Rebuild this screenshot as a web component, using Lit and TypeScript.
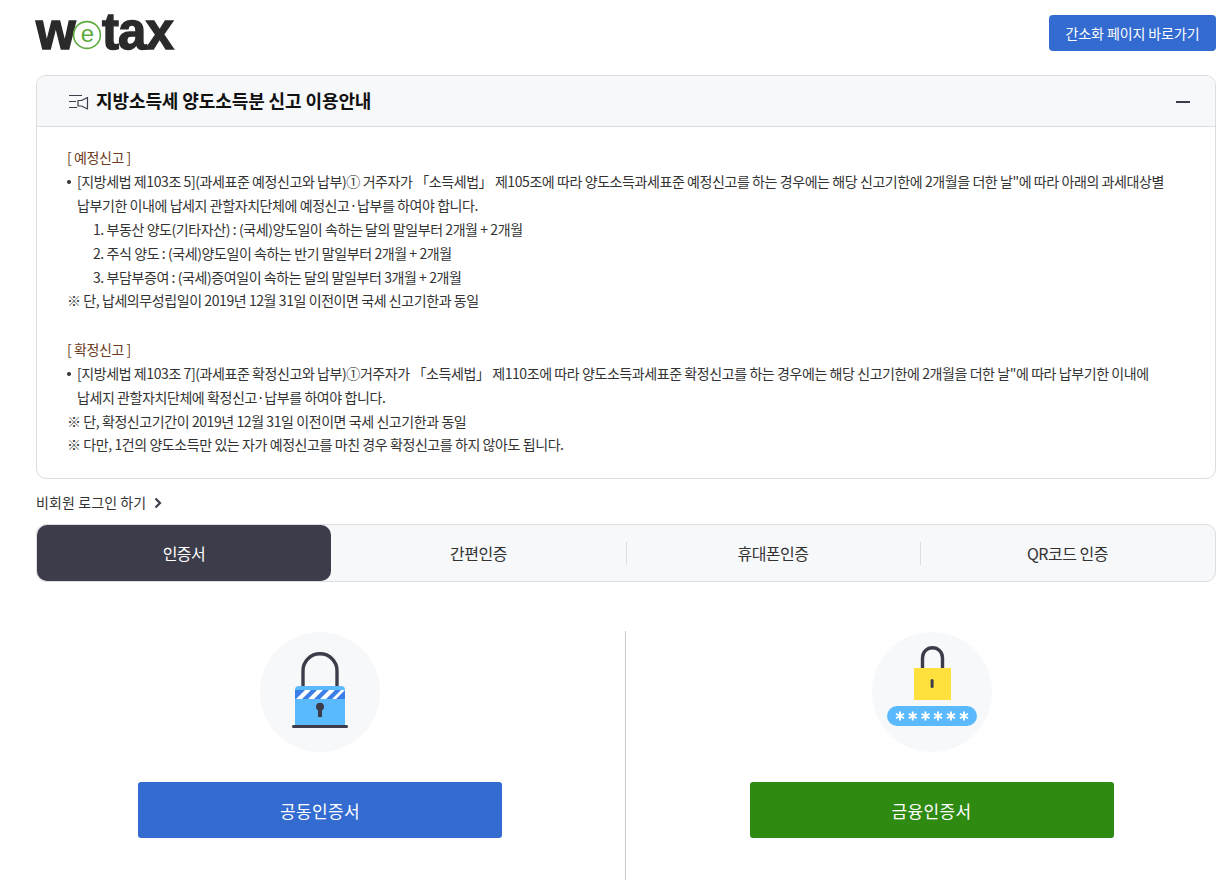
import { LitElement, css, html, svg } from 'lit'
import { customElement } from 'lit/decorators.js'

const steps = [
  '1. 부동산 양도(기타자산) : (국세)양도일이 속하는 달의 말일부터 2개월 + 2개월',
  '2. 주식 양도 : (국세)양도일이 속하는 반기 말일부터 2개월 + 2개월',
  '3. 부담부증여 : (국세)증여일이 속하는 달의 말일부터 3개월 + 2개월',
]
const tabs = ['인증서', '간편인증', '휴대폰인증', 'QR코드 인증']
const stars = [28, 40.7, 53.5, 66, 79, 92]

@customElement('app-root')
export class AppRoot extends LitElement {
  static styles = css`
    :host {
      display: block;
      height: 891px;
      overflow: hidden;
      background: #fff;
      color: #333;
      font-family: "Noto Sans CJK KR", "Noto Sans", sans-serif;
    }
    .page { padding: 0 11px 0 36px; }
    .top {
      display: flex;
      justify-content: space-between;
      align-items: flex-start;
      height: 75px;
    }
    .logo {
      display: flex;
      align-items: center;
      margin-top: 10px;
      height: 44px;
      font: 700 51px/44px "Liberation Sans", sans-serif;
      -webkit-text-stroke: 1.4px #2a2a2a;
      color: #2a2a2a;
      letter-spacing: -0.8px;
    }
    .logo svg { margin: 6px 0 0 -3px; }
    .logo text { -webkit-text-stroke: 0; }
    .simple {
      margin-top: 15px;
      width: 167px;
      height: 36px;
      border: 0;
      border-radius: 4px;
      background: #336bd1;
      color: #fff;
      font: 400 14px "Noto Sans CJK KR", sans-serif;
      letter-spacing: -0.1px;
      padding: 0;
    }
    .panel {
      border: 1px solid #dcdde0;
      border-radius: 10px;
      overflow: hidden;
    }
    .panel-head {
      display: flex;
      align-items: center;
      box-sizing: border-box;
      height: 51px;
      padding: 0 25px 3px 32px;
      background: #f7f8fa;
      border-bottom: 1px solid #dcdde0;
    }
    .panel-head svg { margin-top: 5px; }
    .panel-head h1 {
      margin: 0 0 0 7px;
      font-size: 18px;
      font-weight: 700;
      color: #111;
      letter-spacing: -0.1px;
    }
    .minus {
      margin: 4px 0 0 auto;
      width: 14px;
      height: 2px;
      background: #3d3c4a;
    }
    .panel-body {
      padding: 19px 30px 20.5px;
      font-size: 14px;
      line-height: 23.9px;
      letter-spacing: -0.42px;
      color: #333;
      word-break: keep-all;
    }
    .tag { color: #6e3b22; }
    .bullet {
      position: relative;
      padding-left: 10px;
      max-width: 1095px;
    }
    .bullet::before {
      content: '';
      position: absolute;
      left: 0;
      top: 10px;
      width: 4px;
      height: 4px;
      border-radius: 50%;
      background: #333;
    }
    .step { padding-left: 26px; }
    .gap { height: 24.5px; }
    .guest {
      display: flex;
      align-items: center;
      gap: 8px;
      height: 45px;
      padding-top: 2px;
      box-sizing: border-box;
      font-size: 14px;
      letter-spacing: 0.1px;
      color: #333;
    }
    .guest svg { margin-top: 1px; }
    .tabs {
      display: grid;
      grid-template-columns: 294px 295px 294px 1fr;
      height: 56px;
      border: 1px solid #dcdde0;
      border-radius: 10px;
      background: #f7f8fa;
    }
    .tab {
      position: relative;
      display: flex;
      align-items: center;
      justify-content: center;
      font-size: 16px;
      letter-spacing: -0.48px;
      color: #333;
    }
    .tab.on {
      background: #3d3c4a;
      color: #fff;
      border-radius: 10px;
    }
    .tab.sep::before {
      content: '';
      position: absolute;
      left: 0;
      top: 17px;
      height: 23px;
      width: 1px;
      background: #dcdde0;
    }
    .certs {
      display: grid;
      grid-template-columns: 589px 1fr;
      margin-top: 49px;
      height: 249px;
    }
    .cert {
      display: flex;
      flex-direction: column;
      align-items: center;
      padding-right: 21px;
    }
    .cert + .cert {
      border-left: 1px solid #c9c9cc;
      padding: 0 0 0 21px;
    }
    .circle {
      width: 120px;
      height: 120px;
      border-radius: 50%;
      background: #f7f8fa;
      margin-top: 1px;
    }
    .btn {
      margin-top: 30px;
      width: 364px;
      height: 56px;
      border: 0;
      border-radius: 3px;
      padding: 2px 0 0;
      color: #fff;
      font: 400 17px "Noto Sans CJK KR", sans-serif;
      letter-spacing: 0.4px;
    }
    .blue { background: #336bd1; }
    .green { background: #2f8a12; }
  `

  render() {
    return html`
      <div class="page">
        <div class="top">
          <div class="logo">
            <span>w</span>
            <svg width="30" height="30" viewBox="0 0 30 30">
              <circle cx="15" cy="15" r="13.4" fill="#fff" stroke="#5cab3c" stroke-width="1.6"></circle>
              <text x="15" y="21.5" text-anchor="middle" font-family="Liberation Sans" font-size="24" font-weight="400" fill="#5cab3c">e</text>
            </svg>
            <span>tax</span>
          </div>
          <button class="simple">간소화 페이지 바로가기</button>
        </div>

        <section class="panel">
          <div class="panel-head">
            <svg width="20" height="16" viewBox="0 0 20 16" fill="none" stroke="#3d3c4a" stroke-width="1.2">
              <path d="M0 1.5H13M0 7.5H7M0 13.5H8"></path>
              <path d="M18.5 3.5V15L12.5 12H9V6.5H12.5Z" stroke-linejoin="round"></path>
            </svg>
            <h1>지방소득세 양도소득분 신고 이용안내</h1>
            <span class="minus"></span>
          </div>
          <div class="panel-body">
            <div class="tag">[ 예정신고 ]</div>
            <div class="bullet">[지방세법 제103조 5](과세표준 예정신고와 납부)① 거주자가 「소득세법」 제105조에 따라 양도소득과세표준 예정신고를 하는 경우에는 해당 신고기한에 2개월을 더한 날"에 따라 아래의 과세대상별 납부기한 이내에 납세지 관할자치단체에 예정신고·납부를 하여야 합니다.</div>
            ${steps.map((s) => html`<div class="step">${s}</div>`)}
            <div>※ 단, 납세의무성립일이 2019년 12월 31일 이전이면 국세 신고기한과 동일</div>
            <div class="gap"></div>
            <div class="tag">[ 확정신고 ]</div>
            <div class="bullet">[지방세법 제103조 7](과세표준 확정신고와 납부)①거주자가 「소득세법」 제110조에 따라 양도소득과세표준 확정신고를 하는 경우에는 해당 신고기한에 2개월을 더한 날"에 따라 납부기한 이내에 납세지 관할자치단체에 확정신고·납부를 하여야 합니다.</div>
            <div>※ 단, 확정신고기간이 2019년 12월 31일 이전이면 국세 신고기한과 동일</div>
            <div>※ 다만, 1건의 양도소득만 있는 자가 예정신고를 마친 경우 확정신고를 하지 않아도 됩니다.</div>
          </div>
        </section>

        <div class="guest">
          비회원 로그인 하기
          <svg width="8" height="12" viewBox="0 0 8 12" fill="none" stroke="#3d3c4a" stroke-width="2.2"><path d="M1.5 1.5 6 6 1.5 10.5"></path></svg>
        </div>

        <div class="tabs">
          ${tabs.map((t, i) => html`<div class="tab ${i === 0 ? 'on' : i > 1 ? 'sep' : ''}">${t}</div>`)}
        </div>

        <div class="certs">
          <div class="cert">
            <div class="circle">
              <svg width="120" height="120" viewBox="0 0 120 120">
                <path d="M43 54V38.7A17 17 0 0 1 77 38.7V54" fill="none" stroke="#3d3c4a" stroke-width="3.4"></path>
                <path d="M35 58a4 4 0 0 1 4-4H81a4 4 0 0 1 4 4V93H35Z" fill="#5bb9fd"></path>
                <rect x="35" y="58" width="50" height="9" fill="#3b7ee8"></rect>
                <path d="M36 67 45 58H51L42 67ZM48 67 57 58H63L54 67ZM60 67 69 58H75L66 67ZM72 67 81 58H85V58L76 67Z" fill="#fff"></path>
                <circle cx="60" cy="74.7" r="4" fill="#3d3c4a"></circle>
                <rect x="58" y="75" width="4" height="10" fill="#3d3c4a"></rect>
                <rect x="32" y="93" width="56" height="3" rx="1.5" fill="#3d3c4a"></rect>
              </svg>
            </div>
            <button class="btn blue">공동인증서</button>
          </div>
          <div class="cert">
            <div class="circle">
              <svg width="120" height="120" viewBox="0 0 120 120">
                <path d="M50.5 36V25.7A10 10 0 0 1 70.5 25.7V36" fill="none" stroke="#3d3c4a" stroke-width="3.4"></path>
                <rect x="42" y="36" width="37" height="32" fill="#fee13c"></rect>
                <rect x="58.6" y="47" width="3" height="9" rx="1.5" fill="#3d3c4a"></rect>
                <rect x="15" y="74" width="90" height="20" rx="10" fill="#5bb9fd"></rect>
                ${stars.map((x) => svg`<path d="M${x} 79.4V88.6M${x - 4} 81.7 ${x + 4} 86.3M${x + 4} 81.7 ${x - 4} 86.3" stroke="#fff" stroke-width="1.9"></path>`)}
              </svg>
            </div>
            <button class="btn green">금융인증서</button>
          </div>
        </div>
      </div>
    `
  }
}
